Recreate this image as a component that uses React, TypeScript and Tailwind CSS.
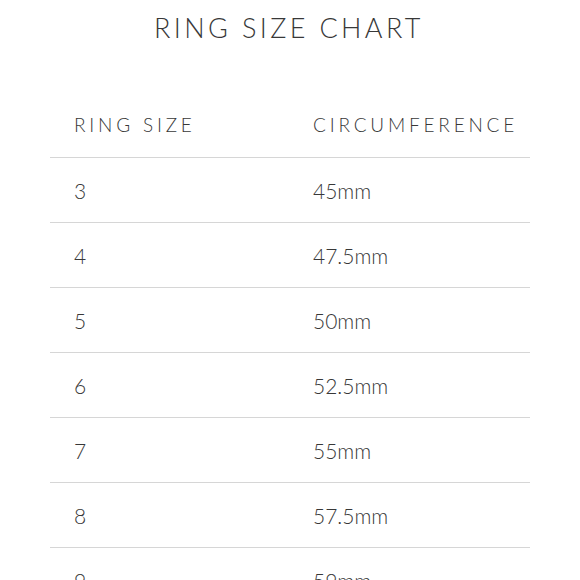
const rows = [
  { size: '3', circ: '45mm' },
  { size: '4', circ: '47.5mm' },
  { size: '5', circ: '50mm' },
  { size: '6', circ: '52.5mm' },
  { size: '7', circ: '55mm' },
  { size: '8', circ: '57.5mm' },
  { size: '9', circ: '59mm' },
];

export default function App() {
  return (
    <div className="h-[580px] w-[580px] overflow-hidden bg-white font-['Lato','Liberation_Sans',sans-serif] font-light text-[#383838]">
      <h1 className="pt-[12px] pr-[2px] text-center text-[27px] leading-[1.2] tracking-[0.125em]">RING SIZE CHART</h1>
      <div className="mx-[50px] mt-[49px]">
        <div className="grid h-[65px] grid-cols-[263px_1fr] items-center border-b border-[#d6d6d6] text-[19px] tracking-[0.2em]">
          <div className="pl-6">RING SIZE</div>
          <div>CIRCUMFERENCE</div>
        </div>
        {rows.map((r) => (
          <div key={r.size} className="grid h-[65px] grid-cols-[263px_1fr] items-center border-b border-[#d6d6d6] text-[21px]">
            <div className="pl-6">{r.size}</div>
            <div>{r.circ}</div>
          </div>
        ))}
      </div>
    </div>
  );
}
